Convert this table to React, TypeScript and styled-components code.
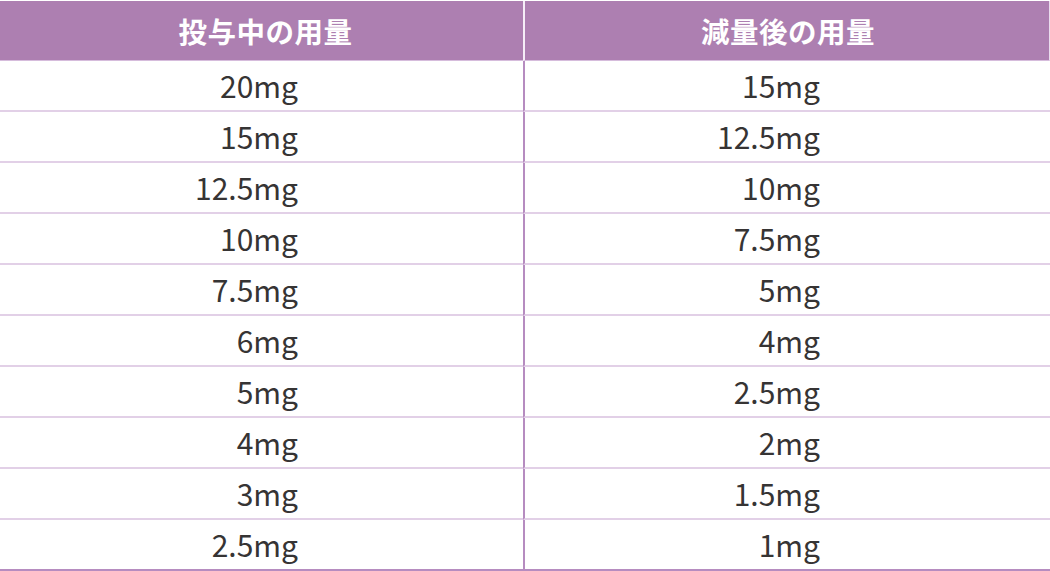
import {Fragment} from 'react';
import styled, {createGlobalStyle} from 'styled-components';

const GlobalStyle = createGlobalStyle`
  html, body {
    margin: 0;
    padding: 0;
    background: #ffffff;
  }
  body {
    font-family: 'Noto Sans CJK JP', 'Noto Sans', sans-serif;
  }
`;

const purple = '#ad7fb1';
const divider = '#b68cc0';
const rule = '#e2d0e7';

interface Row {
  current: string;
  reduced: string;
}

const rows: Row[] = [
  {current: '20mg', reduced: '15mg'},
  {current: '15mg', reduced: '12.5mg'},
  {current: '12.5mg', reduced: '10mg'},
  {current: '10mg', reduced: '7.5mg'},
  {current: '7.5mg', reduced: '5mg'},
  {current: '6mg', reduced: '4mg'},
  {current: '5mg', reduced: '2.5mg'},
  {current: '4mg', reduced: '2mg'},
  {current: '3mg', reduced: '1.5mg'},
  {current: '2.5mg', reduced: '1mg'},
];

const StyledTable = styled.div`
  width: 1050px;
  padding-top: 1px;
  display: grid;
  grid-template-columns: 523px 527px;
`;

const StyledHeadCell = styled.div<{$divided?: boolean}>`
  height: 59px;
  background: ${purple};
  border-bottom: 1px solid #d6bcdc;
  border-left: ${({$divided}) => ($divided ? '2px solid #f6eef8' : 'none')};
  border-right: ${({$divided}) => ($divided ? '1px solid #eadcee' : 'none')};
  display: flex;
  align-items: center;
  justify-content: center;
  color: #ffffff;
  font-size: 28.5px;
  font-weight: 700;
  letter-spacing: 0.5px;
  padding-left: ${({$divided}) => ($divided ? '2px' : '8px')};
`;

const StyledCell = styled.div<{$divided?: boolean; $last?: boolean; $pad: number}>`
  height: 48px;
  padding-bottom: 1px;
  border-bottom: 2px solid ${({$last}) => ($last ? divider : rule)};
  border-left: ${({$divided}) => ($divided ? `2px solid ${divider}` : 'none')};
  display: flex;
  align-items: center;
  justify-content: flex-end;
  padding-right: ${({$pad}) => $pad}px;
  color: #363434;
  font-size: 30px;
  font-weight: 400;
`;

export default function App() {
  return (
    <>
      <GlobalStyle />
      <StyledTable>
        <StyledHeadCell>投与中の用量</StyledHeadCell>
        <StyledHeadCell $divided>減量後の用量</StyledHeadCell>
        {rows.map((row, index) => (
          <Fragment key={index}>
            <StyledCell $pad={225} $last={index === rows.length - 1}>
              {row.current}
            </StyledCell>
            <StyledCell $divided $pad={230} $last={index === rows.length - 1}>
              {row.reduced}
            </StyledCell>
          </Fragment>
        ))}
      </StyledTable>
    </>
  );
}
